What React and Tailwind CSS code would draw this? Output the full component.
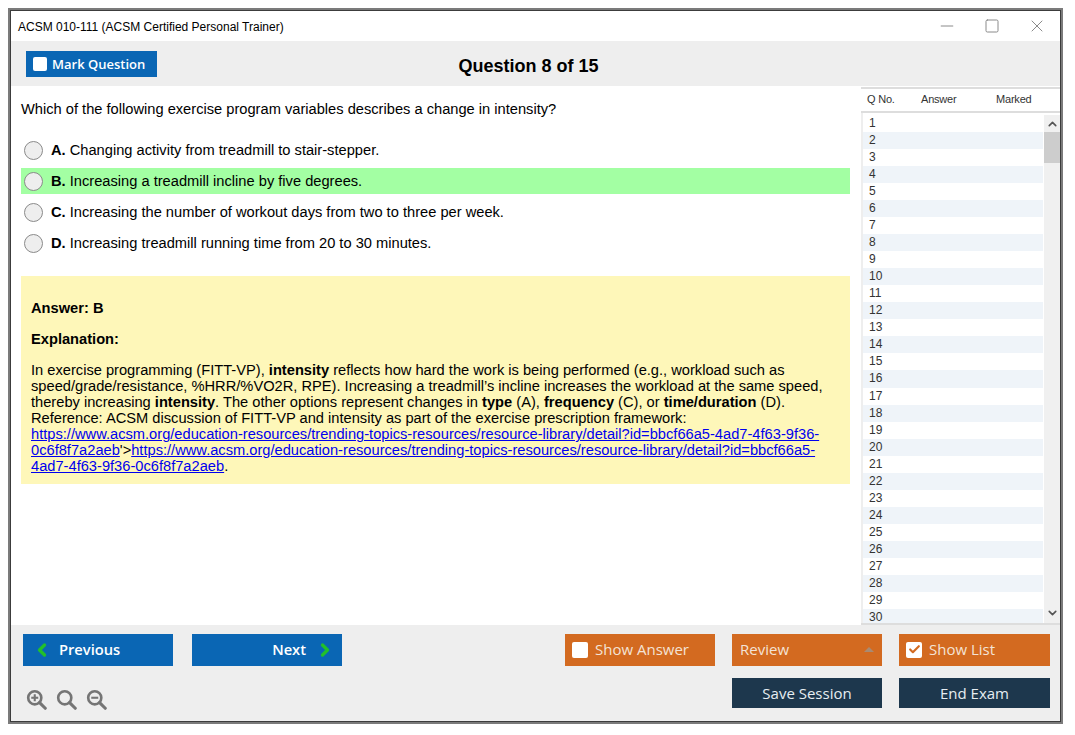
import React from 'react';
import { ChevronLeft, ChevronRight, ChevronUp, ChevronDown, Check, Minus, Square, X } from 'lucide-react';

const options = [
  { key: 'A.', text: 'Changing activity from treadmill to stair-stepper.' },
  { key: 'B.', text: 'Increasing a treadmill incline by five degrees.', correct: true },
  { key: 'C.', text: 'Increasing the number of workout days from two to three per week.' },
  { key: 'D.', text: 'Increasing treadmill running time from 20 to 30 minutes.' },
];

const rows = Array.from({ length: 30 }, (_, i) => i + 1);

const btnFont = "font-['Open_Sans',sans-serif]";

const ZoomIcon = ({ type }) => (
  <svg width="21" height="21" viewBox="0 0 24 24" fill="none" stroke="#757575" strokeWidth="3">
    <circle cx="10" cy="10" r="7.5" />
    <path d="M15.5 15.5 L22 22" strokeWidth="3.6" strokeLinecap="round" />
    {type !== 'plain' && <path d="M6 10h8" strokeWidth="2.4" />}
    {type === 'plus' && <path d="M10 6v8" strokeWidth="2.4" />}
  </svg>
);

const Box = ({ checked }) => (
  <span className="flex h-[16px] w-[16px] items-center justify-center rounded-[2px] bg-white">
    {checked && <Check size={13} strokeWidth={4} className="text-[#d36a20]" />}
  </span>
);

const App = () => {
  return (
    <div className="m-2 h-[716px] w-[1055px] border-2 border-[#7b7b7b] bg-white font-['Liberation_Sans',Arial,sans-serif] text-black">
      <div className="flex h-full flex-col border border-[#3c3c3c]">
        {/* Title bar */}
        <div className="flex h-[30px] items-center justify-between pl-[7px] pt-[1px] text-[12px]">
          <span>ACSM 010-111 (ACSM Certified Personal Trainer)</span>
          <div className="flex items-center gap-[27px] pb-[2px] pr-[13px] text-[#8a8a8a]">
            <Minus size={20} strokeWidth={1.2} />
            <Square size={16} strokeWidth={1.5} />
            <X size={20} strokeWidth={1.2} />
          </div>
        </div>

        {/* Toolbar */}
        <div className="flex h-[45px] items-start bg-[#eeeeee] pl-[15px] pt-[10px]">
          <div className={`flex h-[26px] w-[131px] items-center gap-[5px] bg-[#0a66b4] pl-[7px] text-[13px] font-semibold text-white ${btnFont}`}>
            <span className="h-[14px] w-[14px] rounded-[2px] bg-white" />
            <span className="pt-[1px]">Mark Question</span>
          </div>
          <h1 className="flex-1 pr-[160px] pt-[2px] text-center text-[18px] font-bold">Question 8 of 15</h1>
        </div>

        {/* Body */}
        <div className="flex min-h-0 flex-1">
          <div className="w-[850px] pl-[10px] pr-[11px]">
            <p className="pt-[14px] text-[14.67px] leading-[18px]">
              Which of the following exercise program variables describes a change in intensity?
            </p>
            <div className="mt-[19px] flex flex-col gap-[5px]">
              {options.map((o) => (
                <div key={o.key} className={`flex h-[26px] items-center gap-[8px] pl-[3px] text-[14.67px] ${o.correct ? 'bg-[#a3ffa3]' : ''}`}>
                  <span className="h-[19px] w-[19px] rounded-full border border-[#8a8a8a] bg-[#eeeeee]" />
                  <span><b>{o.key}</b> {o.text}</span>
                </div>
              ))}
            </div>
            <div className="mt-[20px] bg-[#fef7b9] pb-[10px] pl-[10px] pr-[24px] pt-[24px] text-[14.67px] leading-[16px]">
              <p className="font-bold">Answer: B</p>
              <p className="mt-[15px] font-bold">Explanation:</p>
              <p className="mt-[15px]">
                In exercise programming (FITT-VP), <b>intensity</b> reflects how hard the work is being performed (e.g., workload such as speed/grade/resistance, %HRR/%VO2R, RPE). Increasing a treadmill’s incline increases the workload at the same speed, thereby increasing <b>intensity</b>. The other options represent changes in <b>type</b> (A), <b>frequency</b> (C), or <b>time/duration</b> (D).
                <br />
                Reference: ACSM discussion of FITT-VP and intensity as part of the exercise prescription framework:
                <br />
                <a className="text-[#0000ee] underline" href="#a">https://www.acsm.org/education-resources/trending-topics-resources/resource-library/detail?id=bbcf66a5-4ad7-4f63-9f36-0c6f8f7a2aeb</a>
                '&gt;
                <a className="text-[#0000ee] underline" href="#a">https://www.acsm.org/education-resources/trending-topics-resources/resource-library/detail?id=bbcf66a5-4ad7-4f63-9f36-0c6f8f7a2aeb</a>.
              </p>
            </div>
          </div>

          {/* Question list */}
          <div className="flex w-[199px] flex-col overflow-hidden border-b-2 border-[#dddddd] text-[12px] text-[#333333]">
            <div className="mt-[1px] flex h-[26px] shrink-0 items-center border-y-2 border-[#dddddd] pb-[2px] pl-[6px] text-[11px] tracking-[-0.2px]">
              <span className="w-[54px]">Q No.</span>
              <span className="w-[75px]">Answer</span>
              <span>Marked</span>
            </div>
            <div className="flex min-h-0 flex-1 border-l-2 border-[#eeeeee] pt-[1.5px]">
              <div className="min-w-0 flex-1 overflow-hidden">
                {rows.map((n) => (
                  <div key={n} className={`h-[17.07px] pl-[6px] leading-[17px] ${n % 2 === 0 ? 'bg-[#eff4f9]' : ''}`}>{n}</div>
                ))}
              </div>
              <div className="flex w-[17px] flex-col items-center border-l border-white bg-[#f0f0f0]">
                <ChevronUp size={13} strokeWidth={3} className="mt-[1px] h-[16px] text-[#555555]" />
                <div className="h-[31px] w-full bg-[#cdcdcd]" />
                <div className="flex-1" />
                <ChevronDown size={13} strokeWidth={3} className="mb-[2px] h-[16px] text-[#555555]" />
              </div>
            </div>
          </div>
        </div>

        {/* Footer */}
        <div className={`flex h-[96px] justify-between bg-[#eeeeee] pl-[12px] pr-[10px] pt-[9px] ${btnFont}`}>
          <div className="flex flex-col justify-between pb-[11px]">
            <div className="flex gap-[19px] text-[14.7px] font-semibold text-white">
              <div className="flex h-[32px] w-[150px] items-center gap-[7px] bg-[#0a66b4] pb-[1px] pl-[9px]">
                <ChevronLeft size={20} strokeWidth={4} className="text-[#22c02a]" />
                Previous
              </div>
              <div className="flex h-[32px] w-[150px] items-center justify-end gap-[9px] bg-[#0a66b4] pb-[1px] pr-[7px]">
                Next
                <ChevronRight size={20} strokeWidth={4} className="text-[#22c02a]" />
              </div>
            </div>
            <div className="flex gap-[9px] pl-[3px]">
              <ZoomIcon type="plus" />
              <ZoomIcon type="plain" />
              <ZoomIcon type="minus" />
            </div>
          </div>

          <div className="flex flex-col gap-[12px] text-[15px]">
            <div className="flex gap-[17px] text-[#f3e3d6]">
              <div className="flex h-[32px] w-[150px] items-center gap-[7px] bg-[#d36a20] pb-[1px] pl-[7px]">
                <Box />
                Show Answer
              </div>
              <div className="flex h-[32px] w-[150px] items-center justify-between bg-[#d36a20] pb-[1px] px-[8px]">
                Review
                <span className="h-0 w-0 border-x-[5px] border-b-[5px] border-x-transparent border-b-[#a98a72]" />
              </div>
              <div className="flex h-[32px] w-[151px] items-center gap-[7px] bg-[#d36a20] pb-[1px] pl-[7px]">
                <Box checked />
                Show List
              </div>
            </div>
            <div className="flex justify-end gap-[17px] text-[#e6edf2]">
              <div className="flex h-[30px] w-[150px] items-center justify-center bg-[#1d374d]">Save Session</div>
              <div className="flex h-[30px] w-[151px] items-center justify-center bg-[#1d374d]">End Exam</div>
            </div>
          </div>
        </div>
      </div>
    </div>
  );
};

export default App;
